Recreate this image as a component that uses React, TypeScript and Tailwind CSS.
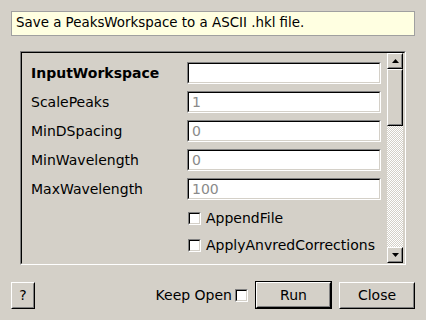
import React from "react";

function Bevel({ children, className = "" }: { children?: React.ReactNode; className?: string }) {
  return (
    <div className={`border border-t-white border-l-white border-b-black border-r-black ${className}`}>
      <div className="w-full h-full border border-t-[#d4d0c8] border-l-[#d4d0c8] border-b-[#808080] border-r-[#808080] flex items-center justify-center">
        {children}
      </div>
    </div>
  );
}

function Input({ value }: { value?: string }) {
  return (
    <div className="w-[194px] h-[22px] border border-t-[#808080] border-l-[#808080] border-b-white border-r-white">
      <div className="w-full h-full border border-t-black border-l-black border-b-[#d4d0c8] border-r-[#d4d0c8] bg-white pl-[3px] flex items-center text-[#8a8a8a]">
        {value ?? ""}
      </div>
    </div>
  );
}

function Check() {
  return (
    <div className="w-[13px] h-[13px] border border-t-[#808080] border-l-[#808080] border-b-white border-r-white">
      <div className="w-full h-full border border-t-black border-l-black border-b-[#d4d0c8] border-r-[#d4d0c8] bg-white" />
    </div>
  );
}

function Arrow({ up }: { up?: boolean }) {
  return (
    <svg width="7" height="4" viewBox="0 0 7 4">
      {up ? <polygon points="0,4 7,4 3.5,0" fill="#000" /> : <polygon points="0,0 7,0 3.5,4" fill="#000" />}
    </svg>
  );
}

export default function App() {
  const rows: { label: string; value?: string; bold?: boolean }[] = [
    { label: "InputWorkspace", bold: true },
    { label: "ScalePeaks", value: "1" },
    { label: "MinDSpacing", value: "0" },
    { label: "MinWavelength", value: "0" },
    { label: "MaxWavelength", value: "100" },
  ];
  return (
    <div className="w-[426px] h-[320px] bg-[#d4d0c8] font-['DejaVu_Sans',sans-serif] text-[14px] text-black pt-[11px] px-[11px] overflow-hidden">
      <div className="h-[25px] border border-[#a0a0a0] bg-[#ffffe1] flex items-center pl-[4px] text-[13.4px]">
        Save a PeaksWorkspace to a ASCII .hkl file.
      </div>
      <div className="mt-[15px] ml-[9px] w-[386px] h-[214px] border border-t-[#808080] border-l-[#808080] border-b-white border-r-white">
        <div className="w-full h-full border border-t-black border-l-black border-b-[#d4d0c8] border-r-[#d4d0c8] flex">
          <div className="flex-1 pl-[9px] pt-[9px] flex flex-col">
            {rows.map((r) => (
              <div key={r.label} className="flex items-center h-[22px] mb-[7px]">
                <div className={`w-[156px] pt-[1px] ${r.bold ? "font-bold" : ""}`}>{r.label}</div>
                <Input value={r.value} />
              </div>
            ))}
            <div className="flex items-center ml-[157px] mt-[5px] h-[13px]">
              <Check />
              <span className="ml-[5px]">AppendFile</span>
            </div>
            <div className="flex items-center ml-[157px] mt-[14px] h-[13px]">
              <Check />
              <span className="ml-[5px]">ApplyAnvredCorrections</span>
            </div>
          </div>
          <div className="w-[16px] mr-[1px] flex flex-col">
            <Bevel className="w-[16px] h-[16px]">
              <Arrow up />
            </Bevel>
            <Bevel className="w-[16px] h-[57px]" />
            <div className="flex-1 bg-[repeating-conic-gradient(#ffffff_0_25%,#d4d0c8_0_50%)] bg-[length:2px_2px]" />
            <Bevel className="w-[16px] h-[16px]">
              <Arrow />
            </Bevel>
          </div>
        </div>
      </div>
      <div className="mt-[16px] flex items-center">
        <Bevel className="w-[24px] h-[27px]">
          <span>?</span>
        </Bevel>
        <div className="flex-1" />
        <span className="mr-[3px]">Keep Open</span>
        <Check />
        <div className="ml-[7px] w-[77px] h-[28px] border border-black">
          <Bevel className="w-full h-full">
            <span>Run</span>
          </Bevel>
        </div>
        <Bevel className="ml-[7px] w-[76px] h-[27px]">
          <span>Close</span>
        </Bevel>
      </div>
    </div>
  );
}
